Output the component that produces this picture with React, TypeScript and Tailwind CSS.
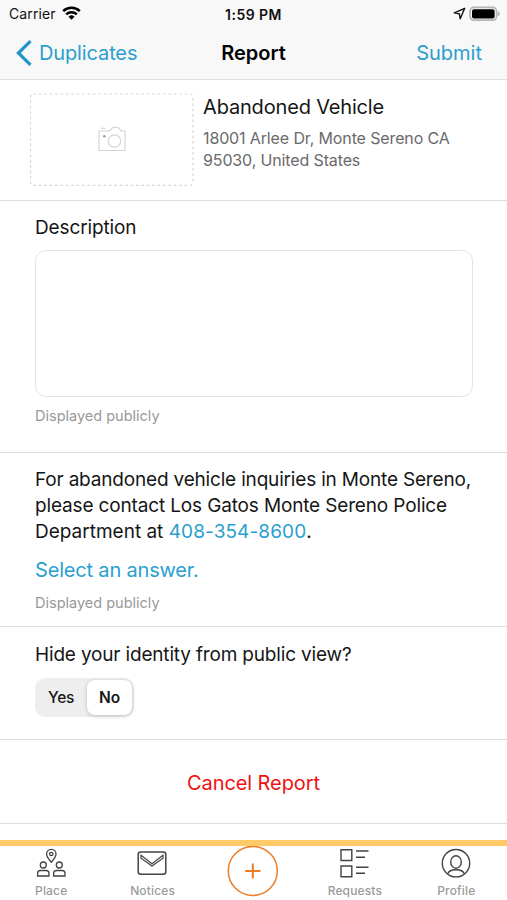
import React from "react";

const tabText = "text-[12px] leading-4 font-medium tracking-[0.15px] text-[#9a9a9a]";

const StatusBar = () => {
  return (
    <div className="grid h-7 grid-cols-3 items-center text-[13px] text-[#111]">
      <div className="flex items-center pb-[2px] pl-[9px]">
        <span className="text-[14px] tracking-[0.1px]">Carrier</span>
        <svg className="ml-[6px]" width="19" height="14" viewBox="0 0 19 14" fill="none">
          <path d="M1.2 5.1a12 12 0 0 1 16.6 0" stroke="#000" strokeWidth="2.6" />
          <path d="M4.2 8.3a7.7 7.7 0 0 1 10.6 0" stroke="#000" strokeWidth="2.4" />
          <path d="M6.5 10.7a4.4 4.4 0 0 1 6 0L9.5 13.8z" fill="#000" />
        </svg>
      </div>
      <div className="text-center text-[14px] font-semibold tracking-[0.45px]">1:59 PM</div>
      <div className="flex items-center justify-end pr-[7px] pb-px">
        <svg width="13" height="13" viewBox="0 0 13 13" fill="none">
          <path d="M11.7 1.3 1.3 5.9l5 .8.9 5z" stroke="#111" strokeWidth="1.4" strokeLinejoin="round" />
        </svg>
        <svg className="ml-[3px]" width="31" height="16" viewBox="0 0 31 16">
          <rect x="1" y="1.4" width="26.6" height="12.8" rx="4" fill="#f8f8f8" stroke="#b5b5b5" strokeWidth="1.7" />
          <rect x="3" y="3.2" width="22.6" height="9.2" rx="2" fill="#000" />
          <path d="M28.8 5.3v5q1.9-.7 1.9-2.5t-1.9-2.5z" fill="#b0b0b0" />
        </svg>
      </div>
    </div>
  );
};

const App = () => {
  return (
    <main className="flex h-[900px] w-[507px] flex-col overflow-hidden bg-white font-['Inter',sans-serif] text-[19px] text-[#161616]">
      <header className="h-20 shrink-0 border-b border-[#e0e0e0] bg-[#f8f8f8]">
        <StatusBar />
        <nav className="grid h-[49px] grid-cols-3 items-center">
          <a href="#" className="flex items-center pl-4 text-[20px] text-[#2a9fce]">
            <svg className="mr-[7px]" width="16" height="26" viewBox="0 0 16 26" fill="none">
              <path d="M14.5 1.2 2.4 13l12.1 11.8" stroke="#2196c9" strokeWidth="3.2" />
            </svg>
            <span className="tracking-[-0.13px]">Duplicates</span>
          </a>
          <h1 className="text-center text-[20px] font-semibold text-black">Report</h1>
          <a href="#" className="pr-[25px] text-right text-[20px] text-[#2a9fce]">
            Submit
          </a>
        </nav>
      </header>

      <section className="flex h-[121px] shrink-0 border-b border-[#dedede] pt-[13px] pl-[29px]">
        <div className="flex h-[93px] w-[165px] items-center justify-center">
          <svg width="165" height="93" viewBox="0 0 165 93" fill="none">
            <rect x="1.5" y="1" width="162.5" height="91.3" rx="3" stroke="#d6d6d6" strokeWidth="1.2" strokeDasharray="2.6 2.8" />
            <g stroke="#d4d4d4" strokeWidth="1.2">
              <path d="M70 38h10.5l3-3.2q3-1.3 6 0l2.8 3.2H96v19.5H70z" strokeLinejoin="round" />
              <circle cx="85.5" cy="48" r="6.2" />
              <path d="M72 35.3h4.5" />
            </g>
            <circle cx="75.3" cy="43.2" r="1.3" fill="#999" />
          </svg>
        </div>
        <div className="ml-[9px]">
          <h2 className="pt-px text-[20px] leading-[27px] tracking-[-0.17px]">Abandoned Vehicle</h2>
          <p className="mt-[6px] text-[16px] leading-[22px] tracking-[-0.13px] text-[#6a6a6a]">
            18001 Arlee Dr, Monte Sereno CA
            <br />
            95030, United States
          </p>
        </div>
      </section>

      <section className="h-[252px] shrink-0 border-b border-[#dedede] px-[35px] pt-[13px]">
        <h3 className="leading-7 tracking-[-0.13px]">Description</h3>
        <div className="mt-[8px] h-[147px] w-[438px] rounded-[11px] border border-[#e4e4e4]" />
        <p className="mt-[9px] text-[14.5px] leading-5 text-[#999]">Displayed publicly</p>
      </section>

      <section className="h-[174px] shrink-0 border-b border-[#dedede] pt-[14px] pl-[35px]">
        <p className="leading-[26px]">
          <span className="tracking-[-0.18px]">For abandoned vehicle inquiries in Monte Sereno,</span>
          <br />
          <span className="tracking-[-0.15px]">please contact Los Gatos Monte Sereno Police</span>
          <br />
          Department at <span className="tracking-[0.1px] text-[#2a9fce]">408-354-8600</span>.
        </p>
        <a href="#" className="mt-[11px] block text-[20px] leading-7 tracking-[-0.18px] text-[#2a9fce]">
          Select an answer.
        </a>
        <p className="mt-[9px] text-[14.5px] leading-5 text-[#999]">Displayed publicly</p>
      </section>

      <section className="h-[113px] shrink-0 border-b border-[#dedede] pt-[14px] pl-[35px]">
        <h3 className="leading-7 tracking-[-0.17px]">Hide your identity from public view?</h3>
        <div className="mt-[9px] flex h-[39px] w-[99px] rounded-[10px] bg-[#eeeeee] p-[2px] text-[15.5px]">
          <button className="w-[46px] pl-[2px] font-medium tracking-[-0.3px]">Yes</button>
          <button className="ml-[4px] w-[45px] rounded-[8px] bg-white font-semibold shadow-[0_1px_4px_rgba(0,0,0,0.2)]">
            No
          </button>
        </div>
      </section>

      <section className="flex h-[84px] shrink-0 items-center justify-center border-b border-[#dedede] pt-[2px]">
        <button className="text-[20px] leading-7 tracking-[-0.1px] text-[#ee1111]">Cancel Report</button>
      </section>

      <footer className="mt-4 grid h-[60px] shrink-0 grid-cols-5 border-t-6 border-[#fdca67]">
        <div className="flex flex-col items-center pt-[2px]">
          <svg width="30" height="31" viewBox="0 0 30 31" fill="none" stroke="#444" strokeWidth="1.3">
            <path d="M15.3 14.2q-4.7-5.2-4.7-8.2a4.7 4.7 0 0 1 9.4 0q0 3-4.7 8.2z" />
            <circle cx="15.3" cy="6" r="1.7" />
            <circle cx="7.3" cy="17" r="3" />
            <circle cx="23.3" cy="17" r="3" />
            <path d="M1.6 28V25.5q0-3 3-3H10q3 0 3 3v2.5z" />
            <path d="M17.6 28V25.5q0-3 3-3H26q3 0 3 3v2.5z" />
          </svg>
          <span className={tabText + " mt-1 pl-px"}>Place</span>
        </div>
        <div className="flex flex-col items-center pt-[2px]">
          <svg width="30" height="31" viewBox="0 0 30 31" fill="none" stroke="#444" strokeWidth="1.5">
            <rect x="1.2" y="4" width="27.6" height="22.2" rx="2.5" />
            <path d="M4 7.2 15 15.8 26 7.2v3L15 18 4 10.2z" strokeWidth="1.2" />
          </svg>
          <span className={tabText + " mt-1 pl-px"}>Notices</span>
        </div>
        <div className="flex justify-center">
          <svg width="52" height="52" viewBox="0 0 52 52" fill="none" stroke="#ed7d25">
            <circle cx="25.8" cy="24.9" r="24.5" strokeWidth="1.5" />
            <path d="M18.2 25h15.2M25.8 17.4v15.2" strokeWidth="2" />
          </svg>
        </div>
        <div className="flex flex-col items-center pt-[2px]">
          <svg width="30" height="31" viewBox="0 0 30 31" fill="none" stroke="#444" strokeWidth="1.4">
            <path d="M1 1.7h10.8v10.8H1zM1 18h10.8v10.8H1z" />
            <path d="M16 3h12.5M16 9.2h9M16 19.2h12.5M16 25.2h9" />
          </svg>
          <span className={tabText + " mt-1"}>Requests</span>
        </div>
        <div className="flex flex-col items-center pt-[2px]">
          <svg width="30" height="31" viewBox="0 0 30 31" fill="none" stroke="#444" strokeWidth="1.4">
            <circle cx="15" cy="15.2" r="13.7" />
            <ellipse cx="15" cy="14" rx="5.3" ry="6.2" />
            <path d="M6.8 25.7q1.2-4 8.2-4t8.2 4" />
          </svg>
          <span className={tabText + " mt-1"}>Profile</span>
        </div>
      </footer>
    </main>
  );
};

export default App;
